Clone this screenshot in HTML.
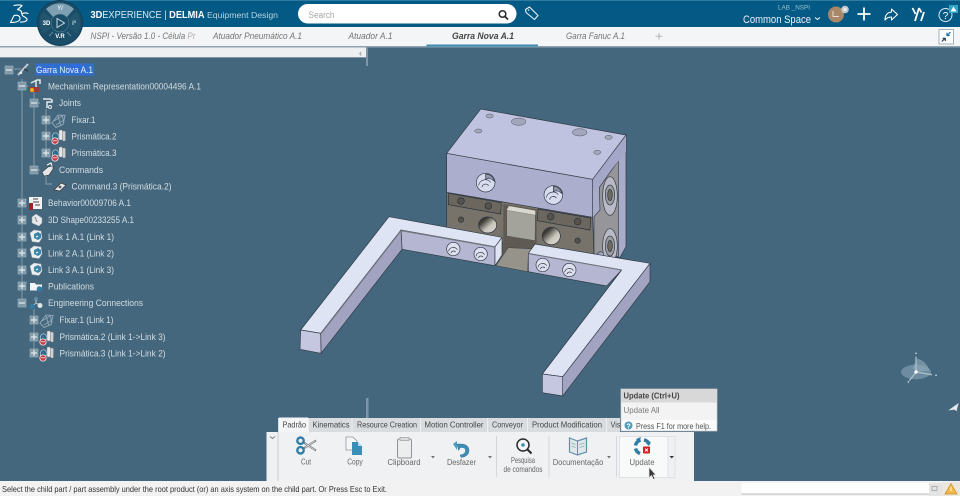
<!DOCTYPE html>
<html><head><meta charset="utf-8"><style>
html,body{margin:0;padding:0;width:960px;height:496px;overflow:hidden;background:#44677d}
svg{position:absolute;left:0;top:0;display:block;filter:blur(.35px)}
text{font-family:"Liberation Sans",sans-serif}
.t{font-size:9.500px;fill:#d3dce2}
.tb{font-size:8px;fill:#666}
.tab{font-size:9.500px;font-style:italic;fill:#757575}
.rt{font-size:8.500px;fill:#444}
.l{stroke:#8ba0af;stroke-width:.9;fill:none}
</style></head><body>
<svg width="960" height="496" viewBox="0 0 960 496" xmlns="http://www.w3.org/2000/svg">
<defs>
<linearGradient id="hole" x1="0" y1="0" x2="1" y2="1"><stop offset=".25" stop-color="#3f3c36"/><stop offset=".6" stop-color="#c9c7bd"/><stop offset="1" stop-color="#e2e0d6"/></linearGradient>
<g id="pm"><rect x="-4" y="-4" width="8" height="8" fill="#8199a9" stroke="#a2b4c0" stroke-width=".6"/><path d="M-3 0H3M0-3V3" stroke="#e4eaee" stroke-width="1.200"/></g>
<g id="mm"><rect x="-4" y="-4" width="8" height="8" fill="#8199a9" stroke="#a2b4c0" stroke-width=".6"/><path d="M-3 0H3" stroke="#e4eaee" stroke-width="1.200"/></g>
<g id="joint"><path d="M-6.500 2.500a3.300 4 0 1 1 6 0z" fill="#2c6c8e" stroke="#c7d3da" stroke-width=".6"/><rect x="0" y="-6" width="3.500" height="10" rx="1" fill="#e7e8e9" stroke="#777" stroke-width=".4"/><rect x="3.500" y="-5" width="3" height="10" rx="1" fill="#cfd2d4" stroke="#777" stroke-width=".4"/><circle cx="-4" cy="5" r="3.200" fill="#c23b46" stroke="#fff" stroke-width=".7"/><path d="M-6 4.800h4" stroke="#fff" stroke-width=".7"/></g>
<g id="fix" fill="none" stroke="#8fa6b6" stroke-width="1"><path d="M-7 3l6-8 7 .5-2 9-7 3z"/><path d="M-5 1l8-5M-3 5l8-5M-1-4l3 10M3-5l2 8"/></g>
<g id="cube"><path d="M-6-4l4-3 7 1 1 7-3 4.500-7-1z" fill="#eceeef" stroke="#a4adb3" stroke-width=".5"/><path d="M-2-3l4-2 3 2v4l-3 2-4-2z" fill="#3b86ab"/><path d="M0 0l2-1" stroke="#fff"/></g>
</defs>

<rect width="960" height="496" fill="#44677d"/>

<!-- header -->
<rect width="960" height="27" fill="#045a84"/>
<rect width="960" height="1" fill="#2d7ba1"/>
<rect y="27" width="960" height="20" fill="#f4f5f6"/>
<rect y="46" width="960" height="1.500" fill="#8fa3b0"/>
<rect y="47.500" width="366" height="9.500" fill="#eeeff0"/>
<rect y="57" width="366" height="1" fill="#7f97a6"/>
<rect x="366" y="47" width="2" height="19" fill="#7d95a5"/>

<!-- 3DS logo -->
<g fill="none" stroke="#fff" stroke-width="1.100" stroke-linecap="round" stroke-linejoin="round">
<path d="M14 5.500c3-.6 7-.8 8 .2l-4.500 4c3 .2 4.500 1.500 4 3.500"/>
<path d="M10.500 22.500l3.500-7c3-.8 6 .2 6 3s-4 4-9.500 4z"/>
<path d="M28 13.500c-3-1-6-.5-6 1.300s5 2.500 5 4.500-3 3-6.500 2.700"/>
</g>

<!-- compass -->
<circle cx="60" cy="23" r="23" fill="#143f58"/>
<circle cx="60" cy="23" r="22" fill="#1a4d68"/>
<path d="M46 9a20 20 0 0 1 28 0l-8 9a9 9 0 0 0-12 0z" fill="#7fa0b2"/>
<path d="M43 12a20 20 0 0 0 0 22l8-6a10 10 0 0 1 0-10z" fill="#22566f"/>
<path d="M77 12a20 20 0 0 1 0 22l-8-6a10 10 0 0 0 0-10z" fill="#22566f"/>
<circle cx="60" cy="23" r="9" fill="#1a4d68" stroke="#6c93a8" stroke-width=".5"/>
<path d="M57 18.500v9l7.500-4.500z" fill="none" stroke="#c7d7df" stroke-width="1"/>
<path d="M53 32l-4 4M67 32l4 4" stroke="#7ea0b2" stroke-width=".7"/>
<text x="60" y="10" font-size="6" font-weight="bold" fill="#e4ecf0" text-anchor="middle" font-style="italic">Y/</text>
<text x="46.500" y="25" font-size="6" font-weight="bold" fill="#fff" text-anchor="middle">3D</text>
<text x="74" y="25" font-size="6" font-weight="bold" fill="#dbe5ea" text-anchor="middle">i³</text>
<text x="60" y="38" font-size="6" font-weight="bold" fill="#fff" text-anchor="middle">V.R</text>

<!-- title -->
<text x="90.500" y="18" font-size="10.500" fill="#dbe9f0" textLength="114" lengthAdjust="spacingAndGlyphs"><tspan font-weight="bold" fill="#fff">3D</tspan>EXPERIENCE | <tspan font-weight="bold" fill="#fff">DELMIA</tspan></text>
<text x="207" y="18" font-size="8.500" fill="#b9d3e0" textLength="71" lengthAdjust="spacingAndGlyphs">Equipment Design</text>

<!-- search -->
<rect x="298" y="4" width="218.500" height="19.500" rx="9.700" fill="#fff"/>
<text x="308.500" y="18" font-size="9.500" fill="#a5a5a5" textLength="26" lengthAdjust="spacingAndGlyphs">Search</text>
<circle cx="502.500" cy="14" r="3.300" fill="none" stroke="#2a2a2a" stroke-width="1.500"/>
<path d="M505 16.500l3 3" stroke="#2a2a2a" stroke-width="1.800"/>
<path d="M525.500 9.500l4-2.500 8.500 8.500-3.500 4-8.500-7z" fill="none" stroke="#e7f0f4" stroke-width="1.100" stroke-linejoin="round"/>
<circle cx="528.500" cy="10" r=".8" fill="#e7f0f4"/>

<!-- right header -->
<text x="794" y="9.500" font-size="6.500" fill="#9cc0d2" text-anchor="middle" textLength="32" lengthAdjust="spacingAndGlyphs">LAB _NSPI</text>
<text x="743" y="23" font-size="11" fill="#e9f1f5" textLength="68" lengthAdjust="spacingAndGlyphs">Common Space</text>
<path d="M815 17.500l2.500 2 2.500-2" fill="none" stroke="#fff" stroke-width="1"/>
<circle cx="836" cy="14.500" r="8" fill="#a98769"/>
<path d="M833 11v5.500h6" stroke="#e9dccf" stroke-width="1" fill="none"/>
<circle cx="845" cy="9.500" r="3.800" fill="#c4c9cc"/>
<circle cx="845" cy="9.500" r="1.500" fill="#eef0f1"/>
<path d="M864 7.500v13M857.500 14h13" stroke="#fff" stroke-width="1.800"/>
<path d="M885 20c0-5 2-7.500 6.500-8V9l6 5.500-6 5.500v-3c-3 0-5 1-6.500 3z" fill="none" stroke="#fff" stroke-width="1.100" stroke-linejoin="round"/>
<path d="M912.500 8l3 6M915 21l4-13M919 8l2.500 4.500M924 12l-3 9" fill="none" stroke="#fff" stroke-width="1.800"/>
<circle cx="945.500" cy="15" r="6.500" fill="none" stroke="#dbe8ee" stroke-width="1"/>
<text x="945.500" y="19" font-size="10" fill="#fff" text-anchor="middle">?</text>
<rect x="949" y="5" width="9" height="8" fill="#2fa5c9"/>
<path d="M953.500 6.500l3 5h-6z" fill="#fff"/>

<!-- tabs -->
<text class="tab" x="90.500" y="39" textLength="105" lengthAdjust="spacingAndGlyphs">NSPI - Versão 1.0 - Célula Pr</text>
<rect x="186" y="28" width="12" height="17" fill="#f4f5f6" opacity=".45"/>
<text class="tab" x="213" y="39" textLength="89" lengthAdjust="spacingAndGlyphs">Atuador Pneumático A.1</text>
<text class="tab" x="348.500" y="39" textLength="44" lengthAdjust="spacingAndGlyphs">Atuador A.1</text>
<text class="tab" x="452" y="39" font-weight="bold" style="fill:#444" textLength="62" lengthAdjust="spacingAndGlyphs">Garra Nova A.1</text>
<rect x="426.500" y="44.500" width="111.500" height="2" fill="#3d8db5"/>
<text class="tab" x="566" y="39" textLength="59" lengthAdjust="spacingAndGlyphs">Garra Fanuc A.1</text>
<path d="M659 33v6.500M655.500 36.200h7" stroke="#b9bcbe" stroke-width="1.200"/>
<rect x="939" y="29.500" width="14.500" height="14.500" fill="#fff" stroke="#9fb0ba" stroke-width="1"/>
<path d="M950.500 32l-3 3M947 32.800v2.700h2.700" fill="none" stroke="#1a6e98" stroke-width="1.200"/>
<path d="M941.800 41.500l3-3M945.300 41v-2.700h-2.700" fill="none" stroke="#1d3f57" stroke-width="1.200"/>
<text x="359" y="56" font-size="9" fill="#6f7a82">‹</text>

<!-- tree lines -->
<path class="l" d="M14 69h7M22 79V303M22 86h6M34 92v78M34 103h6M34 170h6M46 109v44M46 119.500h4M46 136h4M46 153h4M46 176v8h6M22 203h4M22 220h4M22 237h4M22 253h4M22 270h4M22 286h4M22 303h4M34 309v44M34 320h4M34 337h4M34 353h4"/>

<use href="#mm" x="9" y="70"/>
<use href="#mm" x="22" y="86"/>
<use href="#mm" x="34" y="103"/>
<use href="#pm" x="46" y="120"/>
<use href="#pm" x="46" y="136"/>
<use href="#pm" x="46" y="153"/>
<use href="#mm" x="34" y="170"/>
<use href="#pm" x="22" y="203"/>
<use href="#pm" x="22" y="220"/>
<use href="#pm" x="22" y="237"/>
<use href="#pm" x="22" y="253"/>
<use href="#pm" x="22" y="270"/>
<use href="#pm" x="22" y="286"/>
<use href="#mm" x="22" y="303"/>
<use href="#pm" x="34" y="320"/>
<use href="#pm" x="34" y="337"/>
<use href="#pm" x="34" y="353"/>

<!-- tree icons -->
<path d="M18 75l10-11" stroke="#c4ccd1" stroke-width="2"/><path d="M24 69l4 2" stroke="#2c3e4a" stroke-width="1.500"/><circle cx="21" cy="73" r="1.200" fill="#eee"/>
<path d="M31 83l6-3h3v4M36 81v7" fill="none" stroke="#e4e8ea" stroke-width="1.500"/><rect x="29" y="87" width="10" height="5" fill="#a53a35"/><circle cx="32" cy="90" r="2" fill="#e8b321"/>
<path d="M43 99h7l2 1v2h-5v6" fill="none" stroke="#e4e8ea" stroke-width="1.500"/><circle cx="50" cy="107" r="1.500" fill="none" stroke="#e4e8ea"/>
<use href="#fix" x="59" y="120"/>
<use href="#joint" x="59" y="136"/>
<use href="#joint" x="59" y="153"/>
<path d="M42 172l6-5 5-1v3l-4 6-5 1z" fill="#e3e5e6" stroke="#333" stroke-width=".6"/><path d="M47 165l4-2 1 3" stroke="#fff" fill="none"/>
<path d="M54 190l7-7 5 2-6 6z" fill="#e7e9ea" stroke="#333" stroke-width=".7"/><circle cx="60" cy="187" r="1.400" fill="#555"/>
<rect x="29" y="197" width="13" height="12" fill="#f2f2f2"/><rect x="29" y="203" width="4" height="7" fill="#a01f2c"/><path d="M33 199h5M33 202h6M35 205h5" stroke="#444" stroke-width="1"/>
<path d="M32 217l4-3 6 4v5l-3 3-7-3z" fill="#e6e8e9" stroke="#9aa3a9" stroke-width=".5"/><path d="M35 217l2 5" stroke="#7d868c"/>
<use href="#cube" x="36" y="237"/>
<use href="#cube" x="36" y="253"/>
<use href="#cube" x="36" y="270"/>
<path d="M30 283h5l1 1.500h6v6H30z" fill="#f1f2f3"/><circle cx="39.500" cy="289" r="2.800" fill="#2f7da5"/>
<circle cx="36" cy="299" r="2.200" fill="#5f8aa4"/><path d="M36 300v3l-3.500 3M36 303l4 2" stroke="#cbd5da" stroke-width=".8" fill="none"/><circle cx="32" cy="306.500" r="2.500" fill="#2e7da5"/><circle cx="40" cy="305.500" r="2.500" fill="#e1e4e5"/>
<use href="#fix" x="47" y="320"/>
<use href="#joint" x="47" y="337"/>
<use href="#joint" x="47" y="353"/>

<!-- tree text -->
<rect x="35.500" y="63.500" width="58.500" height="12" fill="#2f6fd6" opacity=".95"/>
<text x="36" y="73" font-size="9.500" fill="#e7eef3" textLength="57" lengthAdjust="spacingAndGlyphs">Garra Nova A.1</text>
<text class="t" x="48" y="89.500" textLength="153" lengthAdjust="spacingAndGlyphs">Mechanism Representation00004496 A.1</text>
<text class="t" x="59" y="106" textLength="22" lengthAdjust="spacingAndGlyphs">Joints</text>
<text class="t" x="71.500" y="123" textLength="24" lengthAdjust="spacingAndGlyphs">Fixar.1</text>
<text class="t" x="71.500" y="139.500" textLength="45" lengthAdjust="spacingAndGlyphs">Prismática.2</text>
<text class="t" x="71.500" y="156" textLength="45" lengthAdjust="spacingAndGlyphs">Prismática.3</text>
<text class="t" x="59" y="173" textLength="44" lengthAdjust="spacingAndGlyphs">Commands</text>
<text class="t" x="71.500" y="189.500" textLength="100" lengthAdjust="spacingAndGlyphs">Command.3 (Prismática.2)</text>
<text class="t" x="48" y="206" textLength="83" lengthAdjust="spacingAndGlyphs">Behavior00009706 A.1</text>
<text class="t" x="48" y="223" textLength="86" lengthAdjust="spacingAndGlyphs">3D Shape00233255 A.1</text>
<text class="t" x="48" y="240" textLength="66" lengthAdjust="spacingAndGlyphs">Link 1 A.1 (Link 1)</text>
<text class="t" x="48" y="256.500" textLength="66" lengthAdjust="spacingAndGlyphs">Link 2 A.1 (Link 2)</text>
<text class="t" x="48" y="273" textLength="66" lengthAdjust="spacingAndGlyphs">Link 3 A.1 (Link 3)</text>
<text class="t" x="48" y="289.500" textLength="46" lengthAdjust="spacingAndGlyphs">Publications</text>
<text class="t" x="48" y="306" textLength="95" lengthAdjust="spacingAndGlyphs">Engineering Connections</text>
<text class="t" x="59.500" y="323" textLength="54" lengthAdjust="spacingAndGlyphs">Fixar.1 (Link 1)</text>
<text class="t" x="59.500" y="340" textLength="106" lengthAdjust="spacingAndGlyphs">Prismática.2 (Link 1-&gt;Link 3)</text>
<text class="t" x="59.500" y="356.500" textLength="106" lengthAdjust="spacingAndGlyphs">Prismática.3 (Link 1-&gt;Link 2)</text>

<!-- CAD model, coordinates in 3x space -->
<g transform="translate(290 100) scale(.33333)" stroke-linejoin="round">
<!-- right side -->
<polygon points="908,238 1008,105 1008,440 990,472 908,465" fill="#a9abca" stroke="#2f3a45" stroke-width="2"/>
<polygon points="985,182 985,470 930,455 912,470 912,350 930,330 928,262" fill="#96969a" stroke="#2f3a45" stroke-width="2"/>
<polygon points="908,238 1008,105 1008,155 908,278" fill="#a5a7c8"/>
<!-- lower block -->
<polygon points="470,277 908,352 912,470 470,400" fill="#77736a" stroke="#2f3a45" stroke-width="2"/>
<polygon points="476,280 634,308 632,342 475,314" fill="#6b675f" stroke="#26303a" stroke-width="2"/>
<polygon points="744,327 902,354 900,390 742,362" fill="#6b675f" stroke="#26303a" stroke-width="2"/>
<polygon points="640,312 740,328 740,450 620,497 640,420" fill="#5f5b54"/>
<polygon points="650,330 736,345 735,422 650,408" fill="#a3a39c" stroke="#3b3b3b" stroke-width="1"/>
<polygon points="657,318 736,332 736,345 650,330" fill="#d9d9cf"/>
<ellipse cx="593" cy="375" rx="27" ry="24" fill="url(#hole)" stroke="#26303a" stroke-width="2"/>
<ellipse cx="784" cy="408" rx="27" ry="26" fill="url(#hole)" stroke="#26303a" stroke-width="2"/>
<g fill="#57534c" stroke="#26303a" stroke-width="2"><circle cx="513" cy="303" r="10"/><circle cx="595" cy="318" r="10"/><circle cx="513" cy="359" r="8"/><circle cx="782" cy="350" r="10"/><circle cx="863" cy="365" r="10"/><circle cx="863" cy="422" r="8"/></g>
<!-- top block -->
<polygon points="470,160 908,238 908,352 470,277" fill="#acaecd" stroke="#2f3a45" stroke-width="2"/>
<polygon points="572,27 1008,105 908,238 470,160" fill="#c0c3e0" stroke="#2f3a45" stroke-width="2"/>
<g fill="#a3a6bd" stroke="#4c5560" stroke-width="1.500"><ellipse cx="599" cy="48" rx="11" ry="6"/><ellipse cx="686" cy="65" rx="22" ry="11"/><ellipse cx="869" cy="97" rx="22" ry="11"/><ellipse cx="956" cy="112" rx="11" ry="6"/><ellipse cx="565" cy="93" rx="11" ry="6"/><ellipse cx="922" cy="157" rx="11" ry="6"/></g>
<g fill="none" stroke="#2f3a45" stroke-width="2">
<ellipse cx="587" cy="248" rx="28" ry="28" fill="#d9dbef"/><path d="M587 222a26 26 0 0 1 26 22c-8-8-18-10-26-6z" fill="#8f92a8"/><path d="M566 256a20 19 0 0 1 36-9M576 262a11 11 0 0 1 20-5"/><ellipse cx="790" cy="285" rx="28" ry="28" fill="#d9dbef"/><path d="M790 259a26 26 0 0 1 26 22c-8-8-18-10-26-6z" fill="#8f92a8"/><path d="M769 293a20 19 0 0 1 36-9M779 299a11 11 0 0 1 20-5"/>
</g>
<!-- side circles -->
<g fill="none" stroke="#2f3a45" stroke-width="2"><ellipse cx="960" cy="288" rx="22" ry="58" fill="#b9bac6"/><ellipse cx="960" cy="285" rx="14" ry="30" fill="#9c9ca2"/><ellipse cx="960" cy="285" rx="7" ry="17" fill="#6d6a63"/><ellipse cx="960" cy="438" rx="22" ry="52" fill="#b9bac6"/><ellipse cx="960" cy="438" rx="14" ry="30" fill="#9c9ca2"/><ellipse cx="960" cy="438" rx="7" ry="17" fill="#6d6a63"/></g>
<!-- central floor -->
<polygon points="655,443 735,447 715,460 713,515 618,497" fill="#96938a" stroke="#39424a" stroke-width="1.500"/>
<!-- left arm -->
<polygon points="333,390 615,440 615,497 336,448" fill="#b4b6d2" stroke="#2f3a45" stroke-width="2"/>
<polygon points="333,390 336,448 93,760 92,700" fill="#a1a3c1" stroke="#2f3a45" stroke-width="2"/>
<polygon points="615,440 636,412 636,465 615,497" fill="#dfe3f0" stroke="#2f3a45" stroke-width="2"/>
<polygon points="297,350 636,412 615,440 333,390 92,700 32,690" fill="#dfe4f4" stroke="#2f3a45" stroke-width="2"/>
<polygon points="32,690 92,700 93,760 30,748" fill="#c5c7e0" stroke="#2f3a45" stroke-width="2"/>
<path d="M336 392L615 441" stroke="#74767f" stroke-width="4"/><path d="M333 392L94 700" stroke="#74767f" stroke-width="3"/>
<!-- right arm -->
<polygon points="715,460 995,510 950,558 715,515" fill="#b4b6d2" stroke="#2f3a45" stroke-width="2"/>
<polygon points="1080,490 1080,545 818,888 818,830" fill="#a1a3c1" stroke="#2f3a45" stroke-width="2"/>
<polygon points="735,432 1080,490 818,830 757,822 995,510 715,460" fill="#dfe4f4" stroke="#2f3a45" stroke-width="2"/>
<polygon points="757,822 818,830 818,888 757,878" fill="#c5c7e0" stroke="#2f3a45" stroke-width="2"/>
<path d="M715 461L995 510" stroke="#74767f" stroke-width="3"/>
<!-- arm holes -->
<g fill="#dee0f0" stroke="#2f3a45" stroke-width="2">
<ellipse cx="490" cy="447" rx="20" ry="20"/><ellipse cx="572" cy="462" rx="20" ry="20"/><ellipse cx="758" cy="495" rx="20" ry="20"/><ellipse cx="838" cy="510" rx="20" ry="20"/>
<path fill="none" d="M476 454a14 13 0 0 1 26-5M483 459a8 8 0 0 1 14-3M558 469a14 13 0 0 1 26-5M565 474a8 8 0 0 1 14-3M744 502a14 13 0 0 1 26-5M751 507a8 8 0 0 1 14-3M824 517a14 13 0 0 1 26-5M831 522a8 8 0 0 1 14-3"/>
</g>
</g>

<!-- sash grip -->
<rect x="366" y="398" width="2.500" height="20" fill="#7d95a5"/>

<!-- compass gizmo -->
<g transform="translate(730 340) scale(.33333)">
<ellipse cx="558" cy="96" rx="45" ry="22" fill="#7f9db0" opacity=".7"/>
<path d="M548 82l14-26c20 5 32 20 36 36l-40 4z" fill="#90abba" opacity=".6"/>
<path d="M558 96V50M558 96l48 8M558 96l-20 26" stroke="#a9bdca" stroke-width="4"/>
<circle cx="558" cy="96" r="5" fill="#fff"/><circle cx="558" cy="40" r="2.500" fill="#cdd"/><circle cx="618" cy="106" r="2.500" fill="#cdd"/><circle cx="535" cy="126" r="2.500" fill="#cdd"/>
<path d="M655 211l31-22-9 33-4-13z" fill="#e8ebed"/><path d="M673 209l4 13 2-8z" fill="#2b3a44"/>
</g>

<!-- toolbar -->
<rect x="266.500" y="432" width="427.500" height="50" fill="#f0f1f2"/>
<rect x="278" y="418" width="342" height="14" fill="#d9dcde"/>
<rect x="279" y="417.500" width="29" height="15" fill="#f4f5f6"/>
<path d="M278 432v49" stroke="#c9cdd0"/>
<path d="M270 436.500l2.500 2 2.500-2" fill="none" stroke="#7a7f83" stroke-width="1"/>
<text x="282.500" y="427.500" class="rt" textLength="23.500" lengthAdjust="spacingAndGlyphs">Padrão</text>
<text x="312.500" y="427.500" class="rt" textLength="37" lengthAdjust="spacingAndGlyphs">Kinematics</text>
<text x="357" y="427.500" class="rt" textLength="60" lengthAdjust="spacingAndGlyphs">Resource Creation</text>
<text x="424.500" y="427.500" class="rt" textLength="59" lengthAdjust="spacingAndGlyphs">Motion Controller</text>
<text x="492" y="427.500" class="rt" textLength="31" lengthAdjust="spacingAndGlyphs">Conveyor</text>
<text x="532" y="427.500" class="rt" textLength="70" lengthAdjust="spacingAndGlyphs">Product Modification</text>
<text x="610.500" y="427.500" class="rt" textLength="10" lengthAdjust="spacingAndGlyphs">Vis</text>
<g stroke="#eceeef" stroke-width="1"><path d="M308.500 418v14M352 418v14M420.500 418v14M487.500 418v14M527.500 418v14M606.500 418v14"/></g>
<path d="M496.500 436v41M549 436v41M616.500 436v41" stroke="#d4d7d9" stroke-width="1"/>

<!-- Cut -->
<g transform="translate(296 437)">
<path d="M7.500 5.500L20 13.500M7.500 11.500L20 3.500" stroke="#7d848a" stroke-width="2" fill="none"/>
<path d="M9 6.500L19 13M9 10.500L19 4" stroke="#dfe2e4" stroke-width=".7" fill="none"/>
<circle cx="4.500" cy="3.700" r="3.200" fill="none" stroke="#2f7ea6" stroke-width="2.400"/><circle cx="4.500" cy="13.300" r="3.200" fill="none" stroke="#2f7ea6" stroke-width="2.400"/>
</g>
<text class="tb" x="306" y="464.500" text-anchor="middle" font-size="7.500" textLength="10" lengthAdjust="spacingAndGlyphs">Cut</text>
<!-- Copy -->
<path d="M346 437h7l4 4v9h-11z" fill="#f5f6f6" stroke="#92989c" stroke-width=".8"/>
<path d="M352 442h6l4 4v9h-10z" fill="#3b8fb7"/><path d="M358 442l4 4h-4z" fill="#bcd8e5"/>
<text class="tb" x="355" y="464.500" text-anchor="middle" font-size="7.500" textLength="15.500" lengthAdjust="spacingAndGlyphs">Copy</text>
<!-- Clipboard -->
<rect x="397.500" y="439" width="14" height="19" rx="1.500" fill="#eceded" stroke="#8f9599" stroke-width="1"/>
<rect x="400" y="437.500" width="9" height="3" fill="#dadcdd" stroke="#8f9599" stroke-width=".6"/>
<text class="tb" x="404" y="465" text-anchor="middle" font-size="8.500" textLength="33" lengthAdjust="spacingAndGlyphs">Clipboard</text>
<path d="M431 456h4l-2 2.500z" fill="#777"/>
<!-- Desfazer -->
<path d="M457 444h4c5 0 8 2.500 8 6.500s-3 6.500-8 7l-1-2.500c3.500-.5 5.500-2 5.500-4.500s-2-3-5-3l-2 3z" fill="#3d8cb2" stroke="#2c6f90" stroke-width=".4"/>
<path d="M453 444l4-3v9z" fill="#4c9cc1"/>
<text class="tb" x="461.500" y="465" text-anchor="middle" font-size="8.500" textLength="29" lengthAdjust="spacingAndGlyphs">Desfazer</text>
<path d="M488 456h4l-2 2.500z" fill="#777"/>
<!-- Pesquisa -->
<circle cx="523" cy="445" r="6" fill="#f4f5f6" stroke="#2a2a2a" stroke-width="1.500"/>
<circle cx="523" cy="445" r="1.800" fill="#3c8db5"/>
<path d="M527.500 449.500l4 4" stroke="#2a2a2a" stroke-width="2"/>
<text class="tb" x="523" y="463" text-anchor="middle" font-size="7.500" textLength="24" lengthAdjust="spacingAndGlyphs">Pesquisa</text>
<text class="tb" x="523" y="472" text-anchor="middle" font-size="7.500" textLength="39" lengthAdjust="spacingAndGlyphs">de comandos</text>
<!-- Documentacao -->
<path d="M569.500 438l8 3 9-3v14l-9 3-8-3z" fill="#e2e7e9" stroke="#5f92ab" stroke-width="1.200"/><path d="M577.500 441v14" stroke="#5f92ab"/><path d="M571.500 443l4 1.500M571.500 446l4 1.500M579.500 444.500l5-1.500M579.500 447.500l5-1.500" stroke="#8da8b6" stroke-width=".7"/>
<text class="tb" x="578" y="465" text-anchor="middle" font-size="8.500" textLength="50.500" lengthAdjust="spacingAndGlyphs">Documentação</text>
<path d="M607 456h4l-2 2.500z" fill="#777"/>
<!-- Update -->
<rect x="619.500" y="436.500" width="48.500" height="41" fill="#f8f9f9" stroke="#dfe1e2"/>
<rect x="668" y="436.500" width="7" height="41" fill="#eef0f1" stroke="#dfe1e2"/>
<path d="M669.500 456h4.500l-2.250 2.500z" fill="#333"/>
<path d="M635.500 445.500a7.500 7.500 0 0 1 5-5.500" fill="none" stroke="#2f7ea6" stroke-width="3.500"/>
<path d="M644 439.800a7.500 7.500 0 0 1 5 4" fill="none" stroke="#2f7ea6" stroke-width="3.500"/>
<path d="M635.500 448.500a7.500 7.500 0 0 0 4.500 5" fill="none" stroke="#2f7ea6" stroke-width="3.500"/>
<path d="M641 437l-2 6-3-4zM651 442l-5 1 3 3z" fill="#2f7ea6"/>
<rect x="643" y="446.500" width="7" height="7" rx="1" fill="#cf2027"/><path d="M645 448.500l3 3M648 448.500l-3 3" stroke="#fff" stroke-width=".9"/>
<text class="tb" x="642" y="465" text-anchor="middle" font-size="8.500" textLength="25" lengthAdjust="spacingAndGlyphs">Update</text>
<path d="M649 467v11l2.500-2.500 2 4 1.500-.7-1.800-3.800H656z" fill="#3a3a3a" stroke="#e9e9e9" stroke-width=".7"/>

<!-- tooltip -->
<rect x="621" y="389" width="96" height="42" fill="#f3f3f3" stroke="#c9cbcc" stroke-width=".7"/>
<rect x="621.500" y="389.500" width="95" height="13" fill="#d8d8d8"/>
<rect x="621.500" y="420" width="95" height="10.500" fill="#fbfbfb"/>
<text x="623.500" y="398.500" font-size="8.500" font-weight="bold" fill="#444" textLength="56" lengthAdjust="spacingAndGlyphs">Update (Ctrl+U)</text>
<text x="623.500" y="413" font-size="8.500" fill="#7a7a7a" textLength="36" lengthAdjust="spacingAndGlyphs">Update All</text>
<circle cx="628.500" cy="425.500" r="4" fill="#4e9dbb"/>
<text x="628.500" y="428.500" font-size="7" font-weight="bold" fill="#fff" text-anchor="middle">?</text>
<text x="636" y="429" font-size="8.500" fill="#555" textLength="75" lengthAdjust="spacingAndGlyphs">Press F1 for more help.</text>

<!-- status bar -->
<rect x="0" y="481" width="960" height="15" fill="#f2f2f2"/>
<text x="2" y="492" font-size="8.500" fill="#333" textLength="385" lengthAdjust="spacingAndGlyphs">Select the child part / part assembly under the root product (or) an axis system on the child part. Or Press Esc to Exit.</text>
<rect x="741.500" y="483" width="187.500" height="11" fill="#fff"/>
<path d="M741.500 494H929" stroke="#bdbdbd"/>
<rect x="929" y="483" width="13" height="13" fill="#e4e4e4"/>
<path d="M932 486.500h5v4h-5z" fill="none" stroke="#9a9a9a" stroke-width=".7"/>
<rect x="942" y="482" width="18" height="14" fill="#ebe7dc"/>
<path d="M951 483.500l6 10.500h-12z" fill="#f2b94a" stroke="#c98a22" stroke-width=".7"/>
<path d="M951 487v4" stroke="#fff" stroke-width="1"/>
</svg>
</body></html>
